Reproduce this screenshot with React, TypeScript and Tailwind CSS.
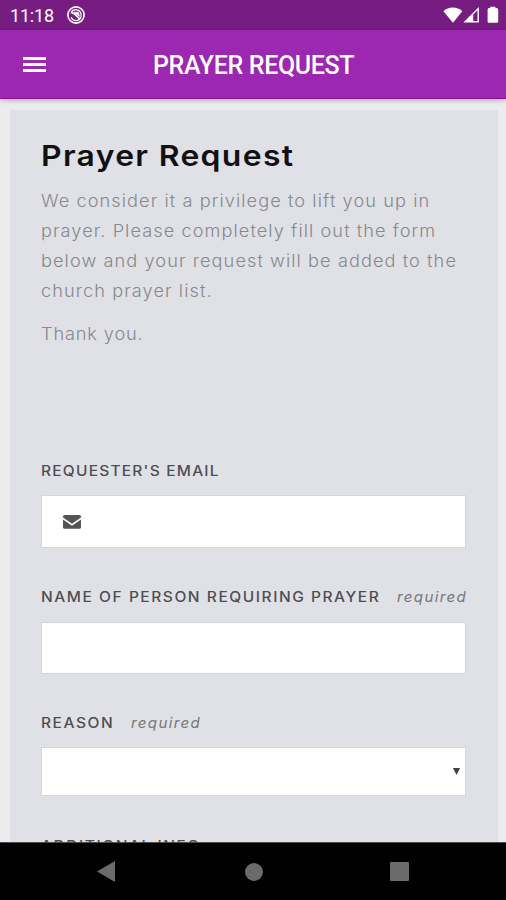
import { useState } from 'react';
import type { ReactNode } from 'react';

const StatusBar = () => {
    return (
        <div className="flex h-[30px] shrink-0 items-center justify-between bg-[#771d82] pl-[10px] pr-[7px] text-white">
            <div className="flex items-center gap-[12px]">
                <span className="pt-[2px] font-['Roboto',sans-serif] text-[18px] leading-[28px] tracking-[-0.2px]">11:18</span>
                <svg width="20" height="20" viewBox="0 0 20 20" fill="none" stroke="currentColor">
                    <circle cx="10" cy="10" r="8.1" strokeWidth="1.6"/>
                    <path d="M5.2 7.6A5.2 5.2 0 0 1 15 9.2V12A5.2 5.2 0 0 1 5.2 12.2" strokeWidth="1.2"/>
                    <path d="M5 7.6L8.4 8.8L13.6 13.8" strokeWidth="1.6"/>
                    <path d="M8.2 7.2L12.4 7.4L13.4 11.4Z" fill="currentColor" strokeWidth="0.8"/>
                </svg>
            </div>
            <div className="flex items-center">
                <svg width="20" height="18" viewBox="0 0 20 18" fill="currentColor">
                    <path d="M0.4 5.2C5.6 0.4 14 0.4 19.3 5.2L10 16.8Z"/>
                </svg>
                <svg width="17" height="18" viewBox="0 0 17 18">
                    <path d="M15.2 2.6V15.7H2.1Z" fill="none" stroke="currentColor" strokeWidth="1.4"/>
                    <path d="M10.2 7V16H1.8Z" fill="currentColor"/>
                </svg>
                <svg width="12" height="18" viewBox="0 0 12 18" fill="currentColor" className="ml-[7px]">
                    <path d="M3.2 0.8H8.4V2H9.6Q11.2 2.2 11.2 3.8V15.4Q11.2 16.8 9.8 16.8H2Q0.6 16.8 0.6 15.4V3.8Q0.6 2.2 2 2H3.2Z"/>
                </svg>
            </div>
        </div>
    )
};

const Header = () => {
    return (
        <header className="z-10 flex h-[69px] shrink-0 items-center border-b border-[#8b0f97] bg-[#9c27b0] pl-[23px] text-white shadow-[0_1px_5px_rgba(0,0,0,0.3)]">
            <button className="flex w-[23px] flex-col gap-[3px]" aria-label="menu">
                <span className="h-[3px] w-full bg-white"></span>
                <span className="h-[3px] w-full bg-white"></span>
                <span className="h-[3px] w-full bg-white"></span>
            </button>
            <h1 className="ml-[107px] pt-[3px] font-['Roboto',sans-serif] text-[25px] font-medium tracking-[-0.35px] whitespace-nowrap">PRAYER REQUEST</h1>
        </header>
    )
};

type FieldProps = {
    label: string;
    tracking?: string;
    required?: string;
    children: ReactNode;
}

const Field = ({ label, tracking = 'tracking-[1.4px]', required, children }: FieldProps) => {
    return (
        <div>
            <label className="flex h-5 items-center text-[14px] font-medium whitespace-nowrap text-[#4e4e52]">
                <span className={`${tracking} origin-left scale-x-[1.107]`}>{label}</span>
                {required && <em className={`${required} origin-left scale-x-[1.04] pt-[2px] text-[14.5px] font-normal tracking-[1.3px] text-[#77777b]`}>required</em>}
            </label>
            {children}
        </div>
    )
};

const App = () => {

    const [email, setEmail] = useState('');
    const [name, setName] = useState('');

    return (
        <div className="flex h-[900px] w-[506px] flex-col overflow-hidden bg-[#ececee]">
            <StatusBar />
            <Header />

            <main className="min-h-0 flex-1 overflow-hidden pt-[11px] pr-[8px] pl-[10px] font-['Inter',sans-serif]">
                <section className="h-[760px] bg-[#e0e1e6] pt-[26px] pr-[31px] pl-[31px]">
                    <h2 className="h-10 origin-left scale-x-[1.1] text-[29px] leading-10 font-semibold tracking-[1.2px] whitespace-nowrap text-[#111114]">Prayer Request</h2>

                    <div className="mt-[10px] origin-left scale-x-[1.069] text-[17px] leading-[30px] font-light tracking-[1px] whitespace-nowrap text-[#88888d]">
                        <p>
                            We consider it a privilege to lift you up in<br />
                            prayer. Please completely fill out the form<br />
                            below and your request will be added to the<br />
                            church prayer list.
                        </p>
                        <p className="mt-[13px] tracking-[0.8px]">Thank you.</p>
                    </div>

                    <div className="mt-[111px] flex flex-col">
                        <Field label="REQUESTER'S EMAIL" tracking="tracking-[1.1px]">
                            <div className="mt-[15px] flex h-[53px] w-[425px] items-center border border-[#d3d6d3] bg-white pl-[21px]">
                                <svg width="18" height="14" viewBox="0 0 18 14" fill="#545456">
                                    <path d="M1.6 0H16.4Q18 0 18 1.5V2.4L9 8.8L0 2.4V1.5Q0 0 1.6 0Z"/>
                                    <path d="M0 4.4L9 10.8L18 4.4V12.3Q18 13.8 16.4 13.8H1.6Q0 13.8 0 12.3Z"/>
                                </svg>
                                <input type="email" value={email} className="ml-3 w-[340px] bg-transparent focus:outline-none" onChange={(e) => setEmail(e.target.value)}/>
                            </div>
                        </Field>

                        <div className="mt-[38px]">
                            <Field label="NAME OF PERSON REQUIRING PRAYER" required="ml-[49px]">
                                <input type="text" value={name} className="mt-[16px] block h-[52px] w-[425px] border border-[#d3d6d3] bg-white px-3 focus:outline-none" onChange={(e) => setName(e.target.value)}/>
                            </Field>
                        </div>

                        <div className="mt-[38px]">
                            <Field label="REASON" required="ml-[24px]">
                                <button className="mt-[15px] flex h-[49px] w-[425px] items-center justify-end border border-[#d6d6da] bg-white pr-[5px]">
                                    <svg width="7" height="7" viewBox="0 0 7 7" fill="#414141">
                                        <path d="M0 0H7L3.5 7Z"/>
                                    </svg>
                                </button>
                            </Field>
                        </div>

                        <div className="mt-[39px]">
                            <Field label="ADDITIONAL INFO">
                                <textarea className="mt-[14px] block h-[50px] w-[425px] bg-white"></textarea>
                            </Field>
                        </div>
                    </div>
                </section>
            </main>

            <nav className="z-10 flex h-[58px] shrink-0 items-center border-t border-[#4d4d50] bg-black pl-[97px]">
                <svg width="18" height="21" viewBox="0 0 18 21" fill="#6b6b6b">
                    <path d="M0 10.5L18 0V21Z"/>
                </svg>
                <span className="ml-[130px] size-[18px] rounded-full bg-[#6b6b6b]"></span>
                <span className="ml-[127px] size-[19px] rounded-[1px] bg-[#6b6b6b]"></span>
            </nav>
        </div>
    )
};

export default App;
